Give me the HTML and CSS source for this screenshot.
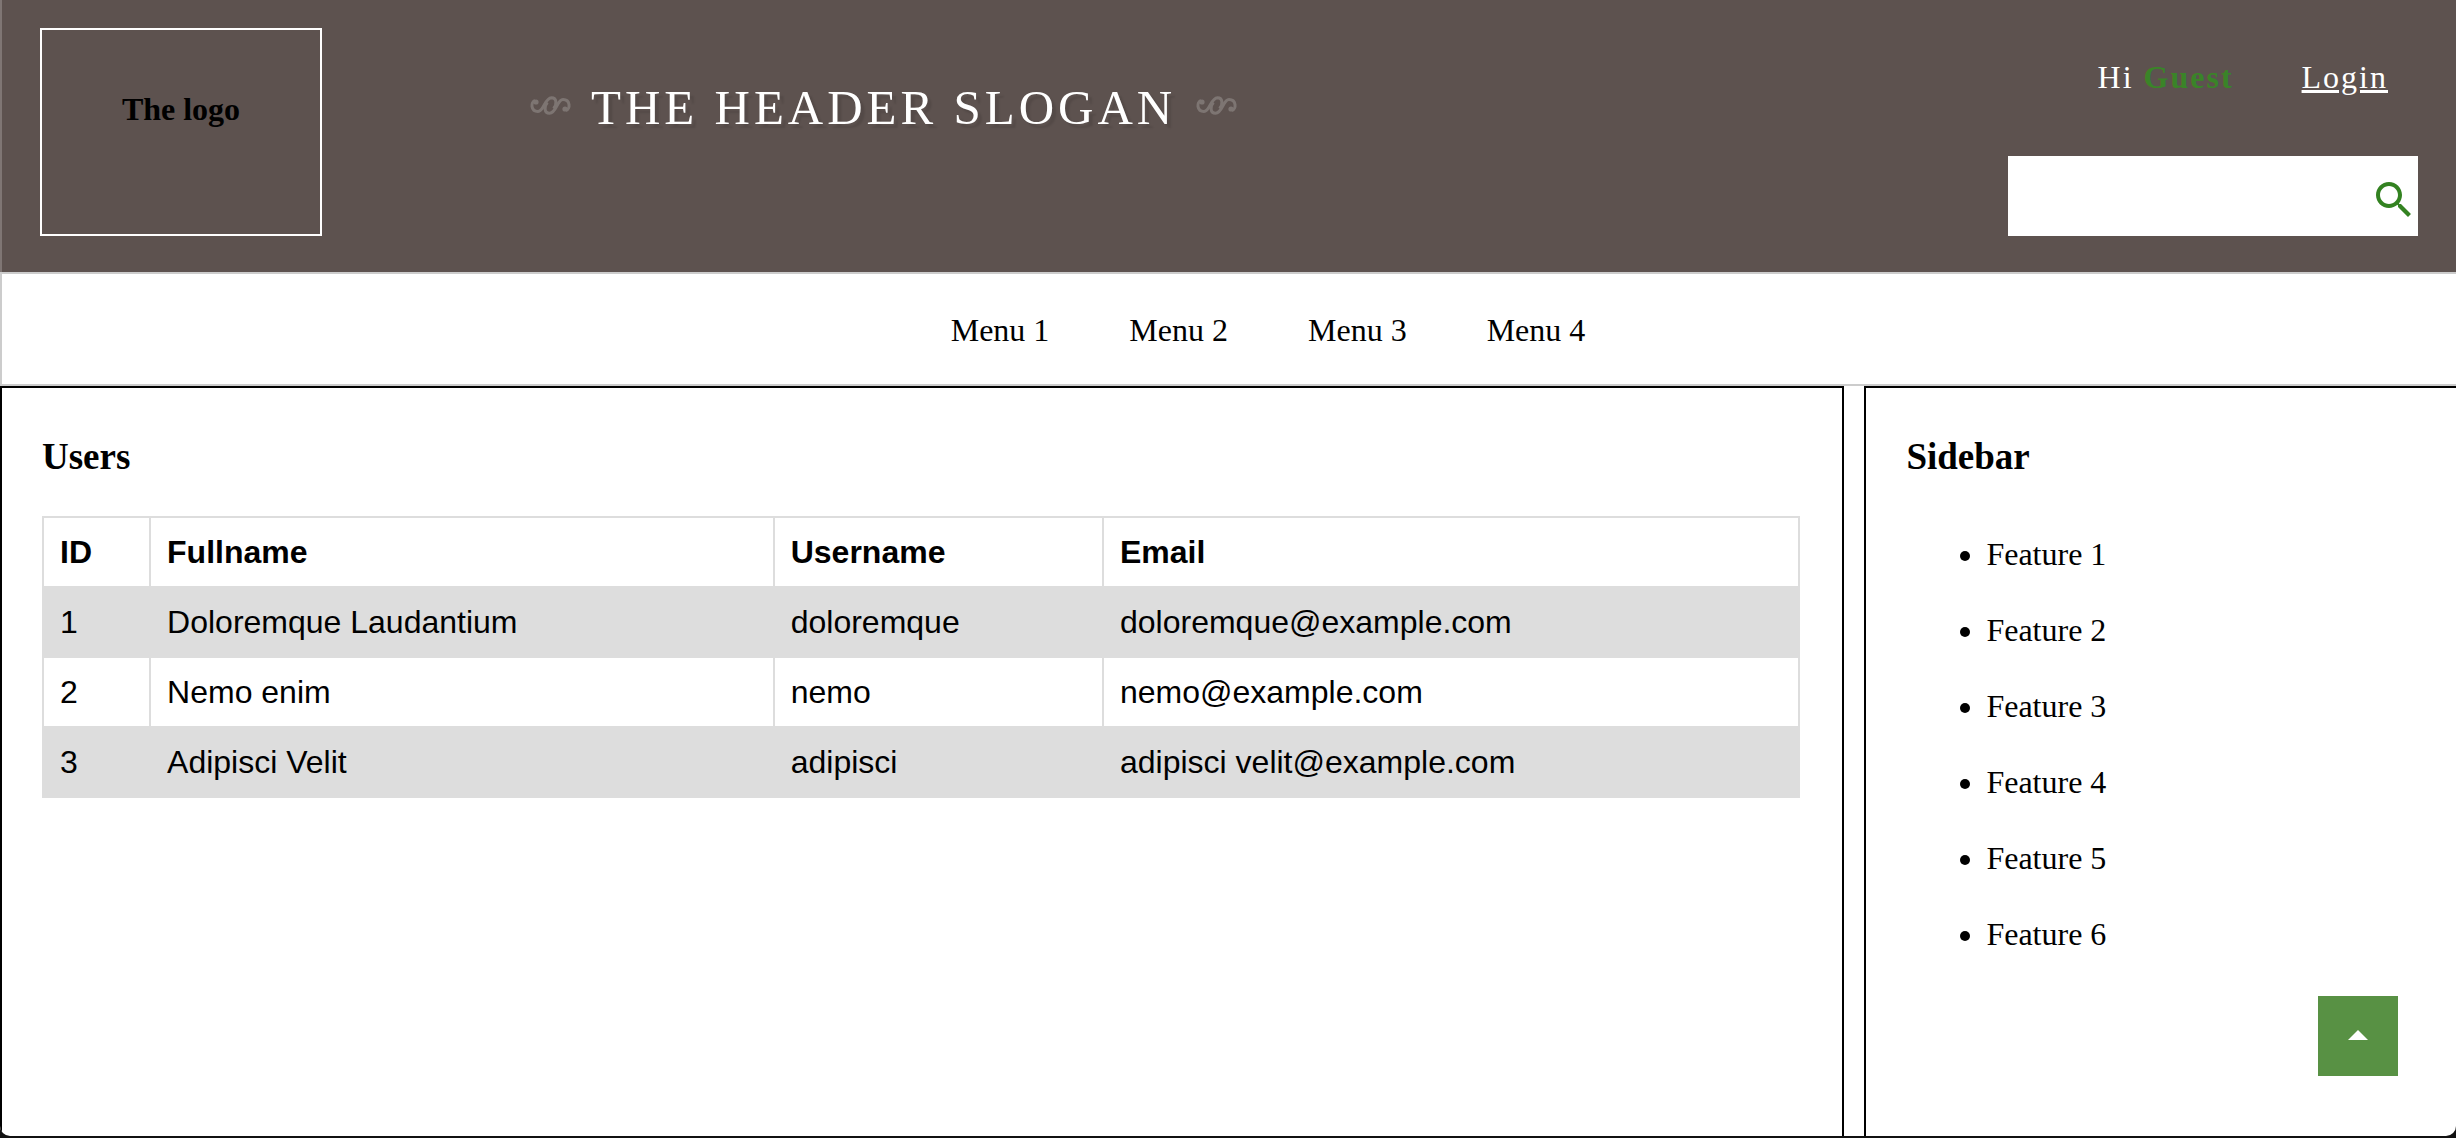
FILE: index.html
```html
<!DOCTYPE html>
<html lang="en">
<head>
  <meta charset="utf-8">
  <meta name="viewport" content="width=device-width, initial-scale=1">
  <title>Users</title>
  <link rel="stylesheet" href="styles.css">
</head>
<body>
  <header class="header">
    <div class="logo">The logo</div>
    <h1 class="slogan">
      <svg class="flourish" viewBox="0 0 41 19" aria-hidden="true"><g id="scroll"><g id="curl"><circle cx="6" cy="6" r="2.6"/><path d="M5 4.500C.5 6 .5 15.500 8 15.500C14 15.500 14.500 2 21.500 1.700C27 1.700 27 9 23.500 12.500"/></g><use href="#curl" transform="rotate(180 20.500 9.500)"/></g></svg>
      <span>The header slogan</span>
      <svg class="flourish" viewBox="0 0 41 19" aria-hidden="true"><use href="#scroll"/></svg>
    </h1>
    <div class="tools">
      <div class="account">
        <span>Hi <strong class="user">Guest</strong></span>
        <a class="login" href="#login">Login</a>
      </div>
      <form class="search" role="search">
        <input class="search-input" type="text" aria-label="Search">
        <button class="search-button" type="submit" aria-label="Search">
          <svg class="icon" viewBox="0 0 24 24" aria-hidden="true"><path d="M15.5 14h-.79l-.28-.27C15.41 12.59 16 11.11 16 9.5 16 5.91 13.09 3 9.5 3S3 5.91 3 9.5 5.91 16 9.5 16c1.61 0 3.09-.59 4.23-1.57l.27.28v.79l5 4.99L20.49 19l-4.99-5zm-6 0C7.01 14 5 11.99 5 9.5S7.01 5 9.5 5 14 7.01 14 9.5 11.99 14 9.5 14z"/></svg>
        </button>
      </form>
    </div>
  </header>

  <nav class="nav">
    <ul class="menu">
      <li><a href="#menu-1">Menu 1</a></li>
      <li><a href="#menu-2">Menu 2</a></li>
      <li><a href="#menu-3">Menu 3</a></li>
      <li><a href="#menu-4">Menu 4</a></li>
    </ul>
  </nav>

  <div class="content">
    <main class="panel">
      <h3 class="title">Users</h3>
      <table class="users">
        <thead>
          <tr><th>ID</th><th>Fullname</th><th>Username</th><th>Email</th></tr>
        </thead>
        <tbody>
          <tr><td>1</td><td>Doloremque Laudantium</td><td>doloremque</td><td>doloremque@example.com</td></tr>
          <tr><td>2</td><td>Nemo enim</td><td>nemo</td><td>nemo@example.com</td></tr>
          <tr><td>3</td><td>Adipisci Velit</td><td>adipisci</td><td>adipisci velit@example.com</td></tr>
        </tbody>
      </table>
    </main>
    <aside class="panel sidebar">
      <h3 class="title">Sidebar</h3>
      <ul class="features">
        <li>Feature 1</li>
        <li>Feature 2</li>
        <li>Feature 3</li>
        <li>Feature 4</li>
        <li>Feature 5</li>
        <li>Feature 6</li>
      </ul>
    </aside>
  </div>

  <button class="to-top" type="button" aria-label="Back to top">
    <svg class="icon" viewBox="0 0 24 24" aria-hidden="true"><path d="M7 14l5-5 5 5z"/></svg>
  </button>
</body>
</html>
```
FILE: styles.css
```css
* {
  box-sizing: border-box;
}

html {
  background: #111;
}

body {
  display: flex;
  flex-direction: column;
  min-height: calc(100vh - 2px);
  margin: 0;
  overflow: hidden;
  border-radius: 0 0 10px 10px;
  background: #fff;
  color: #000;
  font: 32px/36px "Liberation Serif", "Times New Roman", serif;
}

.icon {
  display: block;
  width: 48px;
  height: 48px;
  fill: currentColor;
}

/* Header */
.header {
  display: flex;
  align-items: flex-start;
  padding: 28px 38px 36px;
  border-left: 2px solid #7f7674;
  background: #5d524f;
  color: #fff;
}

.logo {
  width: 282px;
  height: 208px;
  padding-top: 61px;
  border: 2px solid #fff;
  color: #000;
  font-weight: bold;
  text-align: center;
}

.slogan {
  display: flex;
  flex: 1;
  align-items: center;
  gap: 20px;
  margin: 52px 0 0;
  padding-left: 208px;
  font-size: 49px;
  font-weight: normal;
  line-height: 56px;
  letter-spacing: 4px;
  text-transform: uppercase;
  text-shadow: 4px 4px 2px rgba(0, 0, 0, 0.1);
}

.flourish {
  width: 41px;
  height: 19px;
  margin-bottom: 6px;
  overflow: visible;
  fill: none;
  stroke: #fff;
  stroke-width: 3px;
  opacity: 0.2;
}

.flourish circle {
  fill: #fff;
  stroke: none;
}

.tools {
  width: 410px;
}

.account {
  display: flex;
  justify-content: flex-end;
  gap: 68px;
  padding: 31px 30px 61px 0;
  letter-spacing: 2px;
}

.user {
  color: #3a8428;
}

.login {
  color: inherit;
}

.search {
  display: flex;
  align-items: center;
  height: 80px;
  background: #fff;
}

.search-input {
  flex: 1;
  min-width: 0;
  height: 100%;
  padding: 0 16px;
  border: 0;
  background: none;
  font: inherit;
}

.search-button {
  padding: 8px 0 0;
  border: 0;
  background: none;
  color: #338221;
}

/* Navigation */
.nav {
  border: solid #ccc;
  border-width: 2px 0 2px 2px;
}

.menu {
  display: flex;
  justify-content: center;
  margin: 0;
  padding: 38px 2px 36px 80px;
  list-style: none;
}

.menu a {
  padding: 0 40px;
  color: inherit;
  text-decoration: none;
}

/* Content */
.content {
  display: grid;
  flex: 1;
  grid-template-columns: 53fr 17fr;
  gap: 20px;
}

.panel {
  padding: 48px 42px 40px 40px;
  border: solid #000;
  border-width: 2px 2px 0;
}

.sidebar {
  border-right: 0;
}

.title {
  margin: 0 0 38px;
  font-size: 37px;
  line-height: 42px;
}

.users {
  width: 100%;
  border-collapse: collapse;
  font-family: "Liberation Sans", Arial, sans-serif;
}

.users th,
.users td {
  padding: 16px;
  border: 2px solid #ddd;
  text-align: left;
}

.users tbody tr:nth-child(odd) {
  background: #ddd;
}

.features {
  margin: 0;
  padding-left: 80px;
}

.features li {
  padding: 20px 0;
}

.to-top {
  position: fixed;
  right: 58px;
  bottom: 62px;
  padding: 16px;
  border: 0;
  background: #589144;
  color: #fff;
}
```
